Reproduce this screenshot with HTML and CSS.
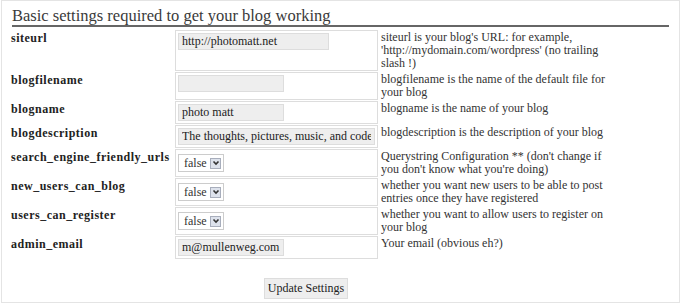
FILE: index.html
```html
<!DOCTYPE html>
<html lang="en">
<head>
    <meta charset="UTF-8">
    <title>Options - Basic settings</title>
    <link rel="stylesheet" href="styles.css">
</head>
<body>
    <div class="frame">
        <h2 class="section-title">Basic settings required to get your blog working</h2>
        <form action="options.php" method="post" class="options-form">
            <table class="settings">
                <tr>
                    <th>siteurl</th>
                    <td class="field"><input type="text" class="w-url" name="siteurl" value="http://photomatt.net"></td>
                    <td class="desc">siteurl is your blog's URL: for example, 'http://mydomain.com/wordpress' (no trailing<br>slash !)</td>
                </tr>
                <tr>
                    <th>blogfilename</th>
                    <td class="field"><input type="text" class="w-short" name="blogfilename" value=""></td>
                    <td class="desc">blogfilename is the name of the default file for your blog</td>
                </tr>
                <tr>
                    <th>blogname</th>
                    <td class="field"><input type="text" class="w-short" name="blogname" value="photo matt"></td>
                    <td class="desc">blogname is the name of your blog</td>
                </tr>
                <tr>
                    <th>blogdescription</th>
                    <td class="field"><input type="text" class="w-full" name="blogdescription" value="The thoughts, pictures, music, and code of Matthew Mullenweg"></td>
                    <td class="desc">blogdescription is the description of your blog</td>
                </tr>
                <tr>
                    <th>search_engine_friendly_urls</th>
                    <td class="field">
                        <span class="select-box"><select name="search_engine_friendly_urls"><option>false</option><option>true</option></select><span class="arrow"><svg width="8" height="8" viewBox="0 0 8 8"><path d="M1.5 2.5 L4 5 L6.5 2.5" fill="none" stroke="#333" stroke-width="1.6"/></svg></span></span>
                    </td>
                    <td class="desc">Querystring Configuration ** (don't change if you don't know what you're doing)</td>
                </tr>
                <tr>
                    <th>new_users_can_blog</th>
                    <td class="field">
                        <span class="select-box"><select name="new_users_can_blog"><option>false</option><option>true</option></select><span class="arrow"><svg width="8" height="8" viewBox="0 0 8 8"><path d="M1.5 2.5 L4 5 L6.5 2.5" fill="none" stroke="#333" stroke-width="1.6"/></svg></span></span>
                    </td>
                    <td class="desc">whether you want new users to be able to post entries once they have registered</td>
                </tr>
                <tr>
                    <th>users_can_register</th>
                    <td class="field">
                        <span class="select-box"><select name="users_can_register"><option>false</option><option>true</option></select><span class="arrow"><svg width="8" height="8" viewBox="0 0 8 8"><path d="M1.5 2.5 L4 5 L6.5 2.5" fill="none" stroke="#333" stroke-width="1.6"/></svg></span></span>
                    </td>
                    <td class="desc">whether you want to allow users to register on your blog</td>
                </tr>
                <tr>
                    <th>admin_email</th>
                    <td class="field"><input type="text" class="w-short" name="admin_email" value="m@mullenweg.com"></td>
                    <td class="desc">Your email (obvious eh?)</td>
                </tr>
            </table>
            <p class="submit"><button type="submit">Update Settings</button></p>
        </form>
    </div>
</body>
</html>
```

FILE: styles.css
```css
body {
    margin: 0;
    font-family: 'Liberation Serif', serif;
    font-size: 12px;
    color: #333;
    background: #fff;
}

.frame {
    box-sizing: border-box;
    width: 679px;
    height: 303px;
    margin-left: 1px;
    padding: 0 10px 0 6px;
    border: 1px solid #e4e4e4;
}

.section-title {
    margin: 5px 0 2px 4px;
    font-size: 16.5px;
    font-weight: normal;
    line-height: 19px;
    color: #3a3a3a;
    border-bottom: 2px solid #666;
}

.settings {
    border-spacing: 1px;
    table-layout: fixed;
    width: 610px;
}

.settings th,
.settings td {
    padding: 1px 2px;
    vertical-align: top;
    line-height: 13px;
    text-align: left;
}

.settings th {
    width: 161px;
    padding-top: 2px;
    font-weight: bold;
    letter-spacing: 0.5px;
    color: #222;
    white-space: nowrap;
}

.settings td.field {
    width: 197px;
    padding: 2px;
    border: 1px solid #ddd;
}

.settings td.desc {
    width: 234px;
    color: #333;
}

.settings input {
    box-sizing: border-box;
    display: block;
    height: 17px;
    margin: 0;
    padding: 0 3px;
    border: 1px solid #ddd;
    background: #eee;
    font-family: 'Liberation Serif', serif;
    font-size: 12px;
    color: #222;
}

.w-url { width: 151px; }
.w-short { width: 106px; }
.w-full { width: 197px; }

.select-box {
    display: inline-flex;
    align-items: center;
    margin-top: 2px;
    padding: 1px 2px 1px 1px;
    border: 1px solid #ccc;
    background: #fff;
}

.select-box select {
    appearance: none;
    border: none;
    background: transparent;
    padding: 0 3px 0 4px;
    margin: 0;
    font-family: 'Liberation Serif', serif;
    font-size: 12px;
    color: #333;
}

.select-box .arrow {
    display: flex;
    align-items: center;
    justify-content: center;
    width: 9px;
    height: 9px;
    border: 1px solid #a8aebc;
    background: #dde2ec;
}

.submit {
    width: 596px;
    margin: 18px 0 0;
    text-align: center;
}

.submit button {
    padding: 2px 3px;
    border: 1px solid #ddd;
    background: #eee;
    font-family: 'Liberation Serif', serif;
    font-size: 12px;
    color: #222;
}
```
